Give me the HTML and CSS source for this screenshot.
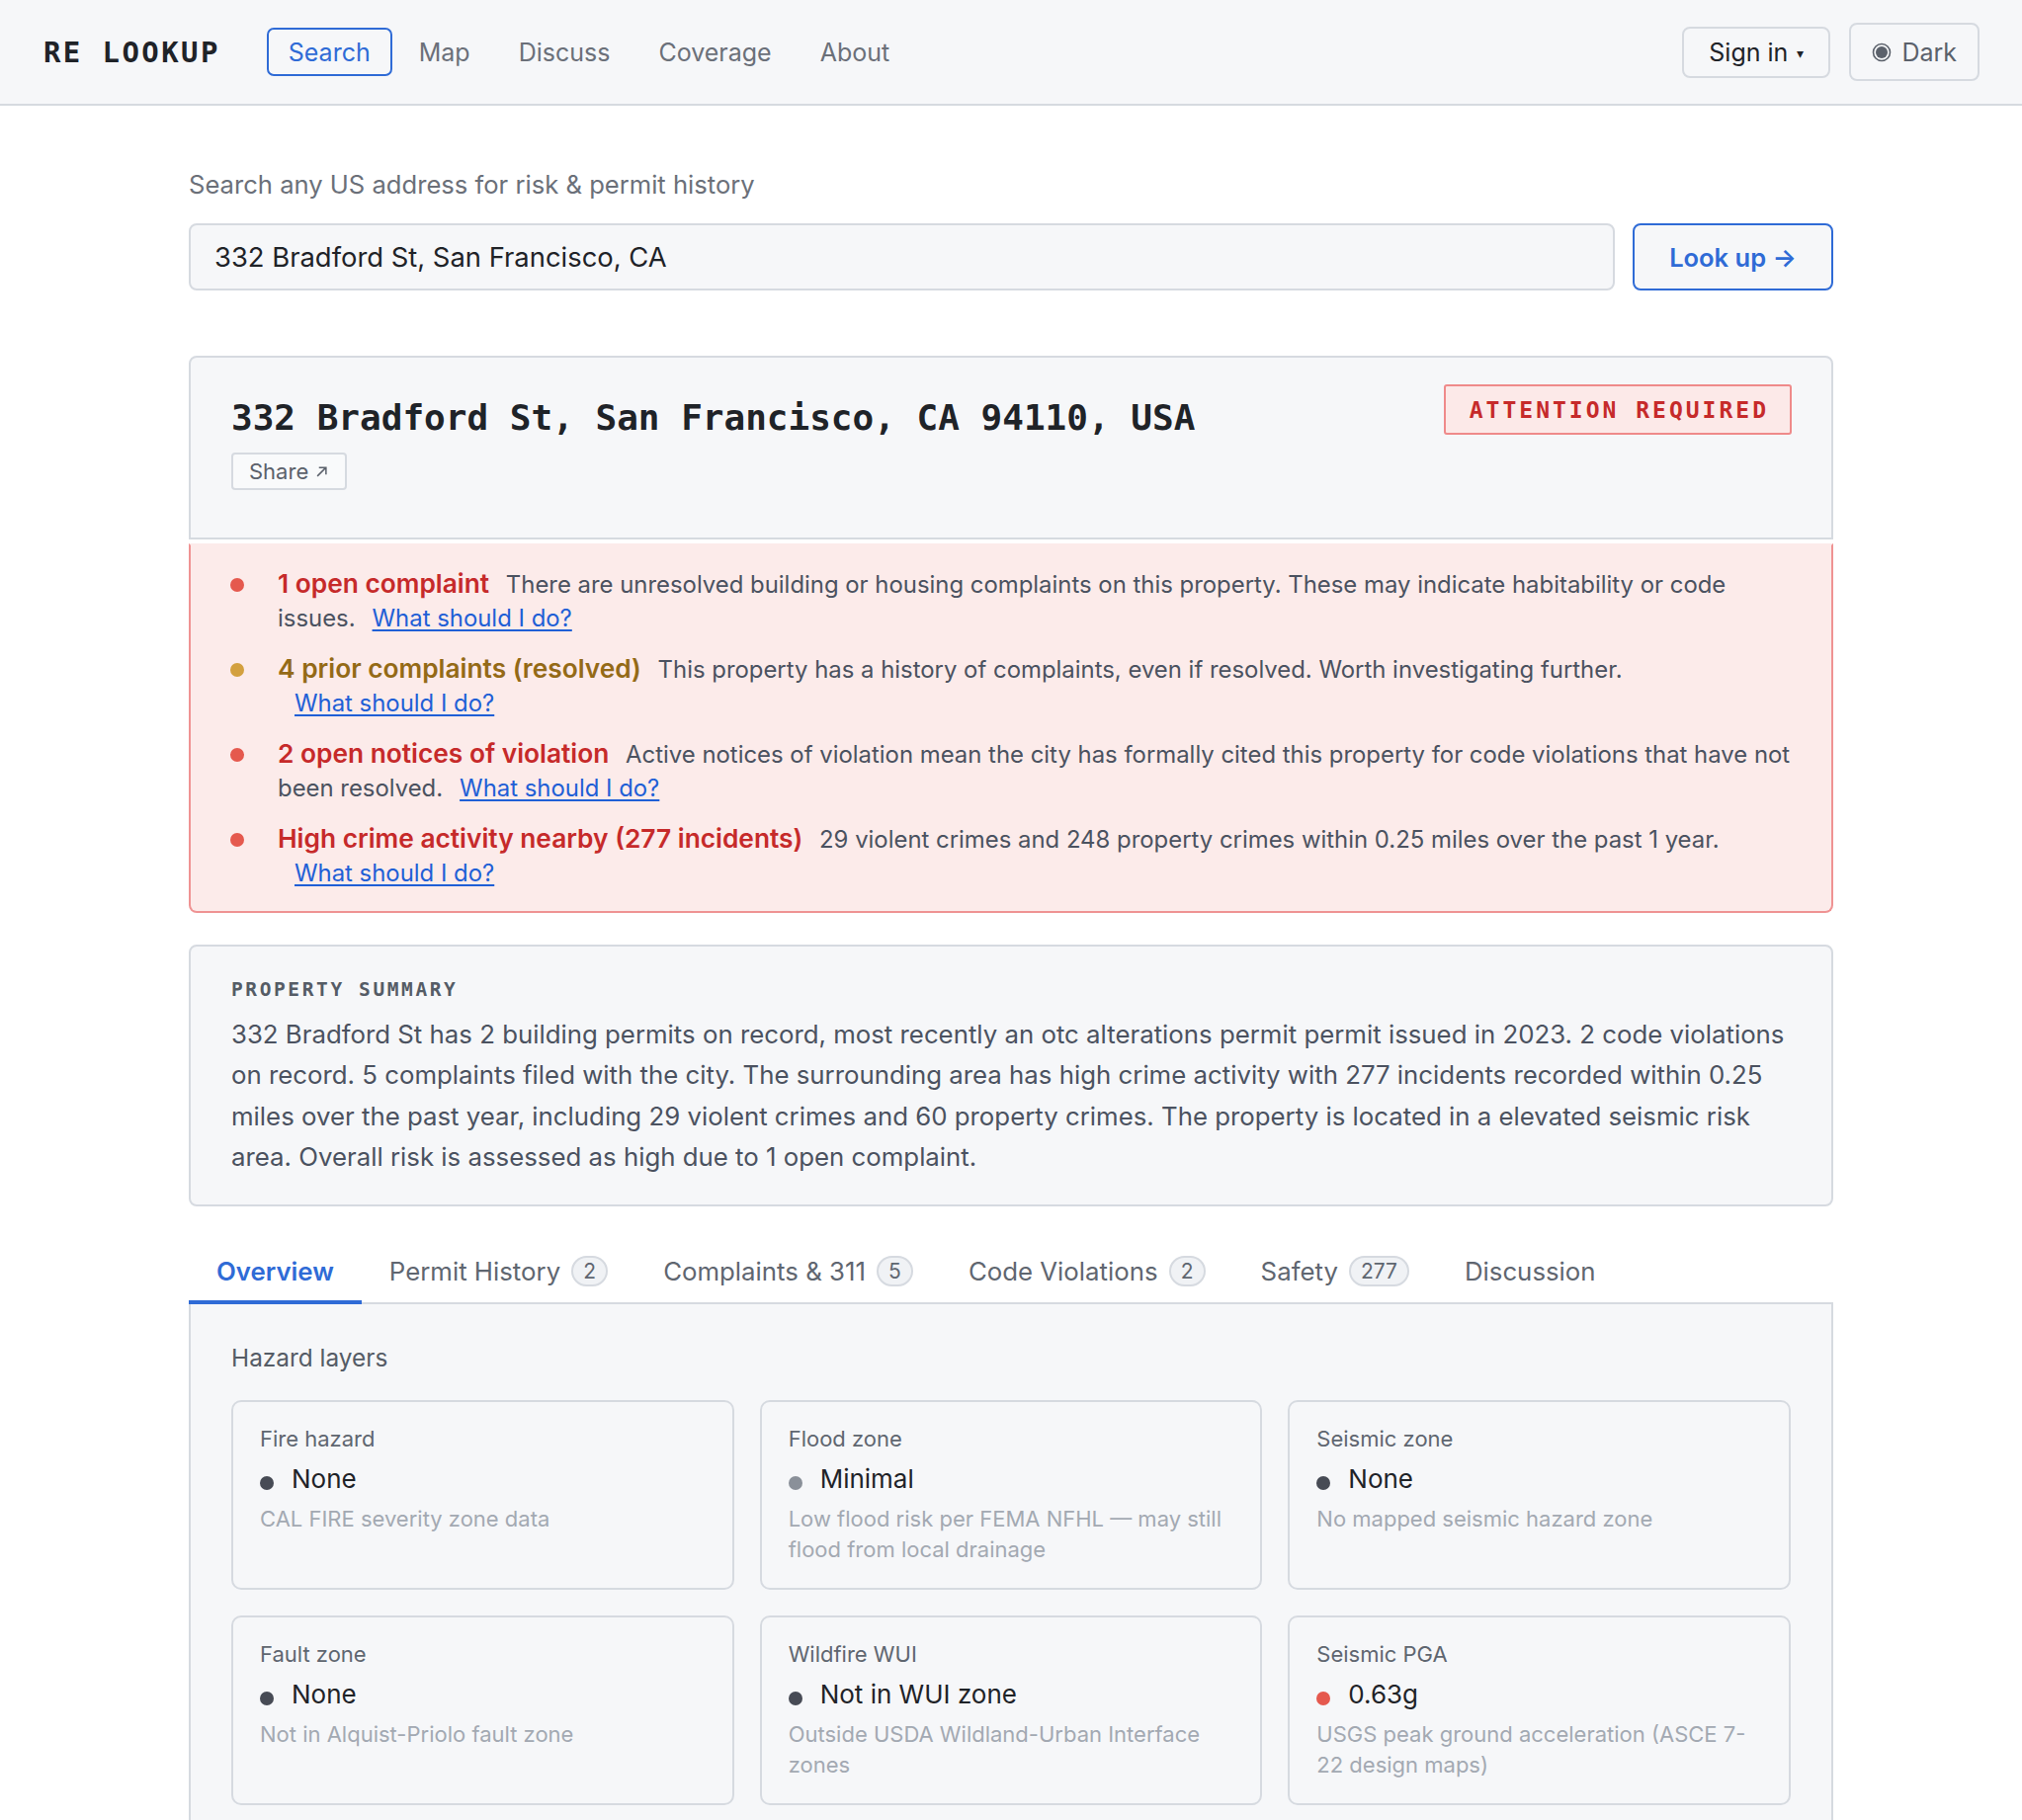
FILE: index.html
```html
<!DOCTYPE html>
<html lang="en">
<head>
<meta charset="utf-8">
<title>RE Lookup</title>
<link rel="stylesheet" href="styles.css">
</head>
<body>
<header class="topbar">
  <div class="brand">RE LOOKUP</div>
  <nav class="nav">
    <a class="nav-link active" href="#">Search</a>
    <a class="nav-link" href="#">Map</a>
    <a class="nav-link" href="#">Discuss</a>
    <a class="nav-link" href="#">Coverage</a>
    <a class="nav-link" href="#">About</a>
  </nav>
  <div class="top-actions">
    <button class="btn-signin">Sign in <span class="caret">▾</span></button>
    <button class="btn-theme">
      <svg class="theme-icon" viewBox="0 0 20 20" width="20" height="20"><circle cx="10" cy="10" r="8.5" fill="none" stroke="#5b616b" stroke-width="1.6"/><circle cx="10" cy="10" r="6" fill="#5b616b"/></svg>
      <span>Dark</span>
    </button>
  </div>
</header>

<main class="page">
  <section class="search">
    <div class="search-label">Search any US address for risk &amp; permit history</div>
    <div class="search-row">
      <div class="search-input">332 Bradford St, San Francisco, CA</div>
      <button class="btn-lookup">Look up →</button>
    </div>
  </section>

  <section class="addr-card">
    <div class="addr-main">
      <h1 class="addr-title">332 Bradford St, San Francisco, CA 94110, USA</h1>
      <button class="btn-share">Share <svg viewBox="0 0 12 12" width="15" height="15"><path d="M2.5 9.5 L9.5 2.5 M3.8 2.5 H9.5 V8.2" fill="none" stroke="#5b616b" stroke-width="1.2"/></svg></button>
    </div>
    <div class="status-badge">ATTENTION REQUIRED</div>
  </section>

  <ul class="flags">
    <li class="flag">
      <span class="dot dot-red"></span>
      <div class="flag-body">
        <strong class="flag-title red">1 open complaint</strong>
        <span class="flag-desc">There are unresolved building or housing complaints on this property. These may indicate habitability or code issues.</span><a class="flag-link" href="#">What should I do?</a>
      </div>
    </li>
    <li class="flag">
      <span class="dot dot-gold"></span>
      <div class="flag-body">
        <strong class="flag-title gold">4 prior complaints (resolved)</strong>
        <span class="flag-desc">This property has a history of complaints, even if resolved. Worth investigating further.</span><a class="flag-link" href="#">What should I do?</a>
      </div>
    </li>
    <li class="flag">
      <span class="dot dot-red"></span>
      <div class="flag-body">
        <strong class="flag-title red">2 open notices of violation</strong>
        <span class="flag-desc">Active notices of violation mean the city has formally cited this property for code violations that have not been resolved.</span><a class="flag-link" href="#">What should I do?</a>
      </div>
    </li>
    <li class="flag">
      <span class="dot dot-red"></span>
      <div class="flag-body">
        <strong class="flag-title red">High crime activity nearby (277 incidents)</strong>
        <span class="flag-desc">29 violent crimes and 248 property crimes within 0.25 miles over the past 1 year.</span><a class="flag-link" href="#">What should I do?</a>
      </div>
    </li>
  </ul>

  <section class="summary">
    <h2 class="summary-heading">PROPERTY SUMMARY</h2>
    <p class="summary-text">332 Bradford St has 2 building permits on record, most recently an otc alterations permit permit issued in 2023. 2 code violations on record. 5 complaints filed with the city. The surrounding area has high crime activity with 277 incidents recorded within 0.25 miles over the past year, including 29 violent crimes and 60 property crimes. The property is located in a elevated seismic risk area. Overall risk is assessed as high due to 1 open complaint.</p>
  </section>

  <nav class="tabs">
    <a class="tab active" href="#">Overview</a>
    <a class="tab" href="#">Permit History <span class="count">2</span></a>
    <a class="tab" href="#">Complaints &amp; 311 <span class="count">5</span></a>
    <a class="tab" href="#">Code Violations <span class="count">2</span></a>
    <a class="tab" href="#">Safety <span class="count">277</span></a>
    <a class="tab" href="#">Discussion</a>
  </nav>

  <section class="panel">
    <h3 class="panel-heading">Hazard layers</h3>
    <div class="hazard-grid">
      <div class="hazard">
        <div class="hz-label">Fire hazard</div>
        <div class="hz-value"><span class="hz-dot dark"></span>None</div>
        <div class="hz-desc">CAL FIRE severity zone data</div>
      </div>
      <div class="hazard">
        <div class="hz-label">Flood zone</div>
        <div class="hz-value"><span class="hz-dot grey"></span>Minimal</div>
        <div class="hz-desc">Low flood risk per FEMA NFHL — may still flood from local drainage</div>
      </div>
      <div class="hazard">
        <div class="hz-label">Seismic zone</div>
        <div class="hz-value"><span class="hz-dot dark"></span>None</div>
        <div class="hz-desc">No mapped seismic hazard zone</div>
      </div>
      <div class="hazard">
        <div class="hz-label">Fault zone</div>
        <div class="hz-value"><span class="hz-dot dark"></span>None</div>
        <div class="hz-desc">Not in Alquist-Priolo fault zone</div>
      </div>
      <div class="hazard">
        <div class="hz-label">Wildfire WUI</div>
        <div class="hz-value"><span class="hz-dot dark"></span>Not in WUI zone</div>
        <div class="hz-desc">Outside USDA Wildland-Urban Interface zones</div>
      </div>
      <div class="hazard">
        <div class="hz-label">Seismic PGA</div>
        <div class="hz-value"><span class="hz-dot red"></span>0.63g</div>
        <div class="hz-desc">USGS peak ground acceleration (ASCE 7-22 design maps)</div>
      </div>
    </div>
  </section>
</main>
</body>
</html>
```
FILE: styles.css
```css
* { box-sizing: border-box; }
html, body { margin: 0; padding: 0; }
body {
  font-family: Inter, "Noto Sans", "Liberation Sans", sans-serif;
  background: #ffffff;
  color: #1f2328;
}
button { font-family: inherit; cursor: pointer; }
a { text-decoration: none; }

/* Top bar */
.topbar {
  height: 107px;
  background: #f6f7f9;
  border-bottom: 2px solid #d6dae0;
  display: flex;
  align-items: center;
  padding: 0 43px 0 44px;
}
.brand {
  font-family: "DejaVu Sans Mono", "Liberation Mono", monospace;
  font-weight: 700;
  font-size: 29px;
  letter-spacing: 2.4px;
  color: #1f2328;
  margin-right: 47px;
}
.nav { display: flex; gap: 5px; }
.nav-link {
  font-size: 25px;
  color: #6b7079;
  height: 49px;
  padding: 0 20px;
  display: flex;
  align-items: center;
  border: 2px solid transparent;
  border-radius: 7px;
}
.nav-link.active { color: #2f6bd6; border-color: #2f6bd6; }
.top-actions { margin-left: auto; display: flex; align-items: center; gap: 19px; }
.btn-signin {
  height: 52px;
  padding: 0 25px;
  font-size: 25px;
  color: #1f2328;
  background: #f6f7f9;
  border: 2px solid #d6dae0;
  border-radius: 8px;
}
.caret { font-size: 14px; margin-left: 2px; vertical-align: 3px; }
.btn-theme {
  height: 59px;
  padding: 0 21px;
  font-size: 25px;
  color: #5b616b;
  background: #f6f7f9;
  border: 2px solid #d6dae0;
  border-radius: 8px;
  display: flex;
  align-items: center;
  gap: 10px;
}

/* Page */
.page { width: 1664px; margin: 0 auto; padding-top: 65px; }

.search-label { font-size: 25.6px; line-height: 30px; color: #6b7079; }
.search-row { display: flex; gap: 18px; margin-top: 24px; }
.search-input {
  flex: 1;
  height: 68px;
  display: flex;
  align-items: center;
  padding: 0 24px;
  font-size: 27.4px;
  color: #1f2328;
  background: #f6f7f9;
  border: 2px solid #d6dae0;
  border-radius: 8px;
}
.btn-lookup {
  width: 203px;
  height: 68px;
  font-size: 25.5px;
  font-weight: 600;
  color: #2f6bd6;
  background: #f6f7f9;
  border: 2px solid #2f6bd6;
  border-radius: 8px;
}

/* Address card */
.addr-card {
  margin-top: 66px;
  background: #f6f7f9;
  border: 2px solid #d6dae0;
  border-radius: 8px 8px 0 0;
  padding: 27px 40px 48px 41px;
  display: flex;
  justify-content: space-between;
  align-items: flex-start;
}
.addr-title {
  margin: 12px 0 0;
  font-family: "DejaVu Sans Mono", "Liberation Mono", monospace;
  font-weight: 700;
  font-size: 36px;
  line-height: 44px;
  color: #1f2328;
}
.btn-share {
  margin-top: 13px;
  height: 38px;
  padding: 0 16px;
  font-size: 22px;
  color: #5b616b;
  background: #f9fafb;
  border: 2px solid #d6dae0;
  border-radius: 4px;
  display: flex;
  align-items: center;
  gap: 6px;
}
.status-badge {
  height: 51px;
  display: flex;
  align-items: center;
  padding: 0 21px 0 24px;
  font-family: "DejaVu Sans Mono", "Liberation Mono", monospace;
  font-weight: 700;
  font-size: 23px;
  letter-spacing: 3px;
  color: #c62a2a;
  background: #fce9e8;
  border: 2px solid #ef8a8a;
  border-radius: 3px;
}

/* Flags */
.flags {
  list-style: none;
  margin: 4px 0 0;
  padding: 23px 36px 21px 40px;
  background: #fcebea;
  border: 2px solid #ef9393;
  border-top-color: #fcebea;
  border-radius: 0 0 8px 8px;
  display: flex;
  flex-direction: column;
  gap: 18px;
}
.flag { display: flex; align-items: flex-start; }
.dot {
  flex: none;
  width: 14px;
  height: 14px;
  border-radius: 50%;
  margin-top: 10px;
  margin-right: 34px;
}
.dot-red { background: #e5594e; }
.dot-gold { background: #d3a03f; }
.flag-body { font-size: 23.9px; line-height: 34px; color: #4b5260; }
.flag-title { font-size: 26.3px; line-height: 20px; font-weight: 600; margin-right: 10px; }
.flag-title.red { color: #c62a2a; }
.flag-title.gold { color: #946a17; }
.flag-link {
  display: inline-block;
  margin-left: 17px;
  line-height: 30px;
  color: #1f5fd6;
  text-decoration: underline;
  text-underline-offset: 3px;
}

/* Summary */
.summary {
  margin-top: 32px;
  background: #f6f7f9;
  border: 2px solid #d6dae0;
  border-radius: 8px;
  padding: 30px 41px 27px;
}
.summary-heading {
  margin: 0;
  font-family: "DejaVu Sans Mono", "Liberation Mono", monospace;
  font-weight: 700;
  font-size: 19.5px;
  letter-spacing: 2.6px;
  line-height: 28px;
  color: #555c66;
}
.summary-text {
  margin: 10px 0 0;
  font-size: 25.8px;
  line-height: 41.4px;
  color: #4b5260;
}

/* Tabs */
.tabs {
  margin-top: 36px;
  display: flex;
  border-bottom: 2px solid #d6dae0;
}
.tab {
  height: 63px;
  padding: 0 28px;
  display: flex;
  align-items: center;
  gap: 11px;
  font-size: 25.8px;
  color: #5f6670;
  border-bottom: 4px solid transparent;
  margin-bottom: -2px;
}
.tab.active { color: #2f6bd6; font-weight: 600; border-bottom-color: #2f6bd6; }
.count {
  display: inline-flex;
  align-items: center;
  justify-content: center;
  min-width: 37px;
  height: 31px;
  padding: 0 10px;
  font-size: 21px;
  color: #5f6670;
  background: #f0f2f5;
  border: 2px solid #d6dae0;
  border-radius: 16px;
}

/* Panel */
.panel {
  background: #f6f7f9;
  border: 2px solid #d6dae0;
  border-top: none;
  padding: 39px 41px 40px;
}
.panel-heading {
  margin: 0;
  font-size: 24.4px;
  font-weight: 400;
  line-height: 30px;
  color: #555c66;
}
.hazard-grid {
  margin-top: 28px;
  display: grid;
  grid-template-columns: repeat(3, 1fr);
  gap: 26px;
}
.hazard {
  height: 192px;
  background: #f6f7f9;
  border: 2px solid #d6dae0;
  border-radius: 10px;
  padding: 22px 27px;
}
.hz-label { font-size: 22px; line-height: 30px; color: #5f6670; }
.hz-value { margin-top: 9px; font-size: 26px; line-height: 34px; color: #1f2328; display: flex; align-items: center; }
.hz-dot { width: 14px; height: 14px; border-radius: 50%; margin: 8px 18px 0 0; flex: none; }
.hz-dot.dark { background: #474b55; }
.hz-dot.grey { background: #8a9099; }
.hz-dot.red { background: #e5594e; }
.hz-desc { margin-top: 8px; font-size: 22px; line-height: 31px; color: #a3a9b2; }
```
